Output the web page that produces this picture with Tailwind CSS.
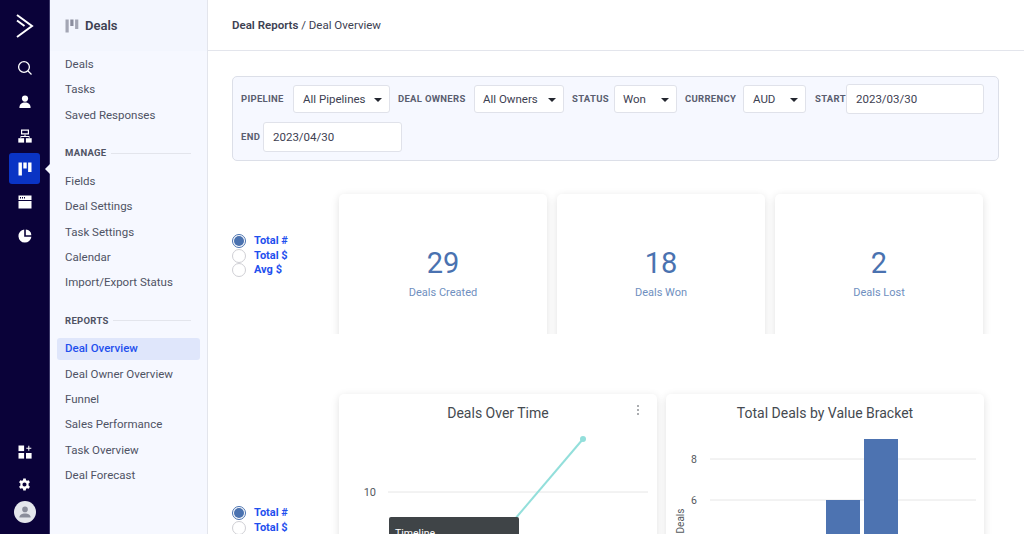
<!DOCTYPE html>
<html lang="en">
<head>
    <meta charset="UTF-8">
    <meta name="viewport" content="width=device-width, initial-scale=1.0">
    <title>Deal Overview</title>
    <script src="https://cdn.jsdelivr.net/npm/@tailwindcss/browser@4"></script>
</head>
<body class="bg-white h-screen overflow-hidden flex font-['Roboto',sans-serif] text-[#3d4152]">
    <!-- Icon rail -->
    <nav class="w-[50px] shrink-0 bg-[#0a0239] border-r border-[#3b3768] flex flex-col items-center justify-between h-[534px]">
        <div class="flex flex-col items-center w-full">
            <div class="h-[51px] flex items-center justify-center">
                <svg width="18" height="26" viewBox="0 0 18 26" fill="none" stroke="#fff" stroke-width="2"><path d="M1 2 L16 13 L1 24"/><path d="M1 7.5 L8.5 13"/></svg>
            </div>
            <div class="h-[34px] flex items-center justify-center">
                <svg width="16" height="16" viewBox="0 0 16 16" fill="none" stroke="#fff" stroke-width="1.3"><circle cx="7" cy="7" r="5.4"/><path d="M11 11 L14.5 14.5"/></svg>
            </div>
            <div class="h-[34px] flex items-center justify-center">
                <svg width="14" height="14" viewBox="0 0 14 14" fill="#fff"><circle cx="7" cy="3.6" r="3.1"/><path d="M1.4 13 C1.4 9.2 3.8 7.6 7 7.6 C10.2 7.6 12.6 9.2 12.6 13 Z"/></svg>
            </div>
            <div class="h-[33px] flex items-center justify-center">
                <svg width="14" height="14" viewBox="0 0 14 14" fill="#fff"><path d="M3 0.5 H11 V5.5 H3 Z M4.2 1.7 V4.3 H9.8 V1.7 Z" fill-rule="evenodd"/><rect x="6.5" y="5.5" width="1" height="2"/><path d="M2.5 7 H11.5 V9 H10.8 V8 H3.2 V9 H2.5 Z"/><rect x="0.3" y="9.2" width="5.8" height="4.4"/><rect x="7.9" y="9.2" width="5.8" height="4.4"/></svg>
            </div>
            <div class="relative mt-[1px] w-[31px] h-[31px] rounded-[3px] bg-[#0a34c4] flex items-center justify-center">
                <svg width="14" height="14" viewBox="0 0 14 14" fill="#fff"><rect x="0.5" y="0.5" width="3.4" height="13"/><rect x="5.3" y="0.5" width="3.4" height="6"/><rect x="10.1" y="0.5" width="3.4" height="9.5"/></svg>
                <span class="absolute left-[36px] top-[11px] border-y-[5px] border-y-transparent border-r-[5px] border-r-[#f5f7ff]"></span>
            </div>
            <div class="h-[34px] mt-[1px] flex items-center justify-center">
                <svg width="14" height="14" viewBox="0 0 14 14" fill="#fff"><path d="M0.5 0.5 H13.5 V13.5 H0.5 Z M0.5 5 V6 H13.5 V5 Z M2 2 V3.4 H3 V2 Z M4 2 V3.4 H5 V2 Z M6 2 V3.4 H7 V2 Z" fill-rule="evenodd"/></svg>
            </div>
            <div class="h-[34px] flex items-center justify-center">
                <svg width="14" height="14" viewBox="0 0 14 14" fill="#fff"><path d="M6.2 0.6 V7.8 H13.4 A6.5 6.5 0 1 1 6.2 0.6 Z"/><path d="M7.8 0.6 A6.2 6.2 0 0 1 13.4 6.2 H7.8 Z"/></svg>
            </div>
        </div>
        <div class="flex flex-col items-center w-full">
            <div class="h-[33px] flex items-center justify-center">
                <svg width="14" height="14" viewBox="0 0 14 14" fill="#fff"><rect x="0.5" y="0.5" width="5.6" height="5.6"/><rect x="0.5" y="8" width="5.6" height="5.6"/><rect x="8" y="8" width="5.6" height="5.6"/><path d="M10.3 0.8 H11.3 V2.8 H13.3 V3.8 H11.3 V5.8 H10.3 V3.8 H8.3 V2.8 H10.3 Z"/></svg>
            </div>
            <div class="h-[33px] flex items-center justify-center">
                <svg width="13" height="13" viewBox="0 0 24 24" fill="#fff"><path fill-rule="evenodd" d="M14.3 1 L14.8 4.2 C15.5 4.5 16.1 4.8 16.7 5.3 L19.7 4.1 L22 8 L19.5 10 C19.6 10.7 19.6 11.4 19.5 12 V14 L22 16 L19.7 19.9 L16.7 18.7 C16.1 19.2 15.5 19.5 14.8 19.8 L14.3 23 H9.7 L9.2 19.8 C8.5 19.5 7.9 19.2 7.3 18.7 L4.3 19.9 L2 16 L4.5 14 C4.4 13.3 4.4 10.7 4.5 10 L2 8 L4.3 4.1 L7.3 5.3 C7.9 4.8 8.5 4.5 9.2 4.2 L9.7 1 Z M12 8.2 A3.8 3.8 0 1 0 12 15.8 A3.8 3.8 0 1 0 12 8.2 Z"/></svg>
            </div>
            <div class="h-[33px] flex items-start justify-center">
                <div class="w-[22px] h-[22px] rounded-full bg-[#e4e6ec] flex items-center justify-center">
                    <svg width="12" height="12" viewBox="0 0 12 12" fill="#8a8d9b"><circle cx="6" cy="3.4" r="2.8"/><path d="M0.4 11.6 C0.4 8.4 3 7.4 6 7.4 C9 7.4 11.6 8.4 11.6 11.6 Z"/></svg>
                </div>
            </div>
        </div>
    </nav>

    <!-- Section sidebar -->
    <aside class="w-[158px] shrink-0 bg-[#f6f8ff] border-r border-[#e3e5ec] h-[534px] text-[11.5px] text-[#4f5364]">
        <div class="h-[51px] bg-[#f3f6fe] pl-[15px] flex items-center gap-[6px]">
            <svg width="14" height="14" viewBox="0 0 14 14" fill="#a3a6b4"><rect x="0.5" y="0.5" width="3.2" height="13"/><rect x="5.3" y="0.5" width="3.2" height="6.5" fill="#8b8e9e"/><rect x="10.1" y="0.5" width="3.2" height="9.5"/></svg>
            <span class="text-[13px] font-semibold text-[#3d4152]">Deals</span>
        </div>
        <ul class="pl-[15px] pt-[1px]">
            <li class="h-[25.3px] flex items-center">Deals</li>
            <li class="h-[25.3px] flex items-center">Tasks</li>
            <li class="h-[25.3px] flex items-center">Saved Responses</li>
        </ul>
        <div class="pl-[15px] pr-[16px] mt-[13px] h-[25px] flex items-center gap-[4px]">
            <span class="text-[9.5px] font-bold tracking-[0.3px] text-[#4f5364]">MANAGE</span>
            <span class="flex-1 h-[1px] bg-[#e3e5ec]"></span>
        </div>
        <ul class="pl-[15px] pt-[3px]">
            <li class="h-[25.3px] flex items-center">Fields</li>
            <li class="h-[25.3px] flex items-center">Deal Settings</li>
            <li class="h-[25.3px] flex items-center">Task Settings</li>
            <li class="h-[25.3px] flex items-center">Calendar</li>
            <li class="h-[25.3px] flex items-center">Import/Export Status</li>
        </ul>
        <div class="pl-[15px] pr-[16px] mt-[13px] h-[25px] flex items-center gap-[4px]">
            <span class="text-[9.5px] font-bold tracking-[0.3px] text-[#4f5364]">REPORTS</span>
            <span class="flex-1 h-[1px] bg-[#e3e5ec]"></span>
        </div>
        <ul class="pt-[3px]">
            <li class="h-[25.3px] flex items-center px-[7px]"><span class="w-full h-[22px] flex items-center pl-[8px] rounded-[3px] bg-[#dfe6fb] text-[#1f50ee] font-medium">Deal Overview</span></li>
            <li class="h-[25.3px] flex items-center pl-[15px]">Deal Owner Overview</li>
            <li class="h-[25.3px] flex items-center pl-[15px]">Funnel</li>
            <li class="h-[25.3px] flex items-center pl-[15px]">Sales Performance</li>
            <li class="h-[25.3px] flex items-center pl-[15px]">Task Overview</li>
            <li class="h-[25.3px] flex items-center pl-[15px]">Deal Forecast</li>
        </ul>
    </aside>

    <!-- Main -->
    <main class="flex-1 min-w-0 h-[534px] overflow-hidden">
        <header class="h-[51px] border-b border-[#e3e5ec] pl-[24px] pt-[1px] flex items-center text-[11.5px] text-[#3d4152]">
            <span class="font-semibold">Deal Reports</span><span>&nbsp;/ Deal Overview</span>
        </header>

        <div class="pl-[24px] pr-[25px] pt-[25px]">
            <!-- Filters -->
            <div class="h-[85px] bg-[#f6f8ff] border border-[#dcdfe8] rounded-[5px] pl-[8px] pr-[2px] pt-[7px] flex flex-wrap items-center content-start gap-y-[8px] text-[11.5px] text-[#3d4152]">
                <label class="text-[9.5px] font-bold tracking-[0.3px] text-[#5a5e70] w-[52px]">PIPELINE</label>
                <div class="relative w-[97px] h-[28px] bg-white border border-[#e0e2ea] rounded-[3px] mr-[8px] pt-[1px] flex items-center pl-[9px]">All Pipelines
                    <span class="absolute right-[7px] top-[12px] border-x-[4px] border-x-transparent border-t-[4px] border-t-[#23262f]"></span>
                </div>
                <label class="text-[9.5px] font-bold tracking-[0.3px] text-[#5a5e70] w-[76px]">DEAL OWNERS</label>
                <div class="relative w-[90px] h-[28px] bg-white border border-[#e0e2ea] rounded-[3px] mr-[8px] pt-[1px] flex items-center pl-[8px]">All Owners
                    <span class="absolute right-[7px] top-[12px] border-x-[4px] border-x-transparent border-t-[4px] border-t-[#23262f]"></span>
                </div>
                <label class="text-[9.5px] font-bold tracking-[0.3px] text-[#5a5e70] w-[42px]">STATUS</label>
                <div class="relative w-[63px] h-[28px] bg-white border border-[#e0e2ea] rounded-[3px] mr-[8px] pt-[1px] flex items-center pl-[8px]">Won
                    <span class="absolute right-[7px] top-[12px] border-x-[4px] border-x-transparent border-t-[4px] border-t-[#23262f]"></span>
                </div>
                <label class="text-[9.5px] font-bold tracking-[0.3px] text-[#5a5e70] w-[58px]">CURRENCY</label>
                <div class="relative w-[63px] h-[28px] bg-white border border-[#e0e2ea] rounded-[3px] mr-[9px] pt-[1px] flex items-center pl-[9px]">AUD
                    <span class="absolute right-[7px] top-[12px] border-x-[4px] border-x-transparent border-t-[4px] border-t-[#23262f]"></span>
                </div>
                <label class="text-[9.5px] font-bold tracking-[0.3px] text-[#5a5e70] w-[31px]">START</label>
                <input class="w-[138px] h-[30px] bg-white border border-[#e0e2ea] rounded-[3px] pl-[9px] text-[11.5px]" value="2023/03/30">
                <label class="text-[9.5px] font-bold tracking-[0.3px] text-[#5a5e70] w-[22px]">END</label>
                <input class="w-[139px] h-[30px] bg-white border border-[#e0e2ea] rounded-[3px] pl-[9px] text-[11.5px]" value="2023/04/30">
            </div>

            <!-- Totals -->
            <section class="mt-[25px] h-[148px] overflow-hidden flex pt-[8px]">
                <div class="w-[107px] shrink-0 pt-[40px] text-[11px] font-bold text-[#1f50ee]">
                    <div class="h-[14.5px] flex items-center gap-[8px]"><span class="w-[14px] h-[14px] rounded-full border border-[#4a72b0] flex items-center justify-center"><span class="w-[10px] h-[10px] rounded-full bg-[#4a72b0]"></span></span>Total #</div>
                    <div class="h-[14.5px] flex items-center gap-[8px]"><span class="w-[14px] h-[14px] rounded-full border border-[#cfcfd4]"></span>Total $</div>
                    <div class="h-[14.5px] flex items-center gap-[8px]"><span class="w-[14px] h-[14px] rounded-full border border-[#cfcfd4]"></span>Avg $</div>
                </div>
                <div class="flex gap-[10px]">
                    <div class="w-[208px] h-[180px] bg-white rounded-[5px] shadow-[0_2px_8px_rgba(0,0,0,0.12)] pt-[50px] text-center">
                        <div class="text-[29px] leading-[38px] text-[#4a72b0]">29</div>
                        <div class="text-[11px] mt-[3px] text-[#6f8fc0]">Deals Created</div>
                    </div>
                    <div class="w-[208px] h-[180px] bg-white rounded-[5px] shadow-[0_2px_8px_rgba(0,0,0,0.12)] pt-[50px] text-center">
                        <div class="text-[29px] leading-[38px] text-[#4a72b0]">18</div>
                        <div class="text-[11px] mt-[3px] text-[#6f8fc0]">Deals Won</div>
                    </div>
                    <div class="w-[208px] h-[180px] bg-white rounded-[5px] shadow-[0_2px_8px_rgba(0,0,0,0.12)] pt-[50px] text-center">
                        <div class="text-[29px] leading-[38px] text-[#4a72b0]">2</div>
                        <div class="text-[11px] mt-[3px] text-[#6f8fc0]">Deals Lost</div>
                    </div>
                </div>
            </section>

            <!-- Charts -->
            <section class="mt-[60px] flex">
                <div class="w-[107px] shrink-0 pt-[112px] text-[11px] font-bold text-[#1f50ee]">
                    <div class="h-[14.5px] flex items-center gap-[8px]"><span class="w-[14px] h-[14px] rounded-full border border-[#4a72b0] flex items-center justify-center"><span class="w-[10px] h-[10px] rounded-full bg-[#4a72b0]"></span></span>Total #</div>
                    <div class="h-[14.5px] flex items-center gap-[8px]"><span class="w-[14px] h-[14px] rounded-full border border-[#cfcfd4]"></span>Total $</div>
                </div>
                <div class="flex gap-[9px]">
                    <div class="relative w-[318px] h-[300px] bg-white rounded-[5px] shadow-[0_2px_8px_rgba(0,0,0,0.12)]">
                        <h3 class="pt-[9px] text-center text-[14px] leading-[20px] text-[#454a50]">Deals Over Time</h3>
                        <span class="absolute right-[18px] top-[11px] flex flex-col gap-[2px]">
                            <i class="w-[2px] h-[2px] bg-[#8f9296] rounded-full"></i><i class="w-[2px] h-[2px] bg-[#8f9296] rounded-full"></i><i class="w-[2px] h-[2px] bg-[#8f9296] rounded-full"></i>
                        </span>
                        <svg class="absolute left-0 top-0" width="318" height="300" viewBox="0 0 318 300">
                            <line x1="49" y1="98" x2="309" y2="98" stroke="#e6e6e6"/>
                            <text x="37" y="102" text-anchor="end" font-size="11" fill="#55595e">10</text>
                            <line x1="170" y1="132" x2="244" y2="45" stroke="#93dfdb" stroke-width="2"/>
                            <circle cx="244" cy="45" r="3" fill="#93dfdb"/>
                            <text transform="translate(16 162) rotate(-90)" text-anchor="middle" font-size="10" fill="#55595e">Deals</text>
                        </svg>
                        <div class="absolute left-[50px] top-[123px] w-[130px] h-[60px] bg-[#3f4447] rounded-[2px] pl-[6px] pt-[9px] text-[10.5px] text-white">Timeline</div>
                    </div>
                    <div class="relative w-[318px] h-[300px] bg-white rounded-[5px] shadow-[0_2px_8px_rgba(0,0,0,0.12)]">
                        <h3 class="pt-[9px] text-center text-[14px] leading-[20px] text-[#454a50]">Total Deals by Value Bracket</h3>
                        <svg class="absolute left-0 top-0" width="318" height="300" viewBox="0 0 318 300">
                            <line x1="44" y1="65" x2="310" y2="65" stroke="#e6e6e6"/>
                            <line x1="44" y1="106" x2="310" y2="106" stroke="#e6e6e6"/>
                            <text x="31" y="69" text-anchor="end" font-size="10.5" fill="#55595e">8</text>
                            <text x="31" y="110" text-anchor="end" font-size="10.5" fill="#55595e">6</text>
                            <rect x="160" y="106" width="34" height="194" fill="#4d73b1"/>
                            <rect x="198" y="45" width="34" height="255" fill="#4d73b1"/>
                            <text transform="translate(18 127) rotate(-90)" text-anchor="middle" font-size="10" fill="#55595e">Deals</text>
                        </svg>
                    </div>
                </div>
            </section>
        </div>
    </main>
</body>
</html>
